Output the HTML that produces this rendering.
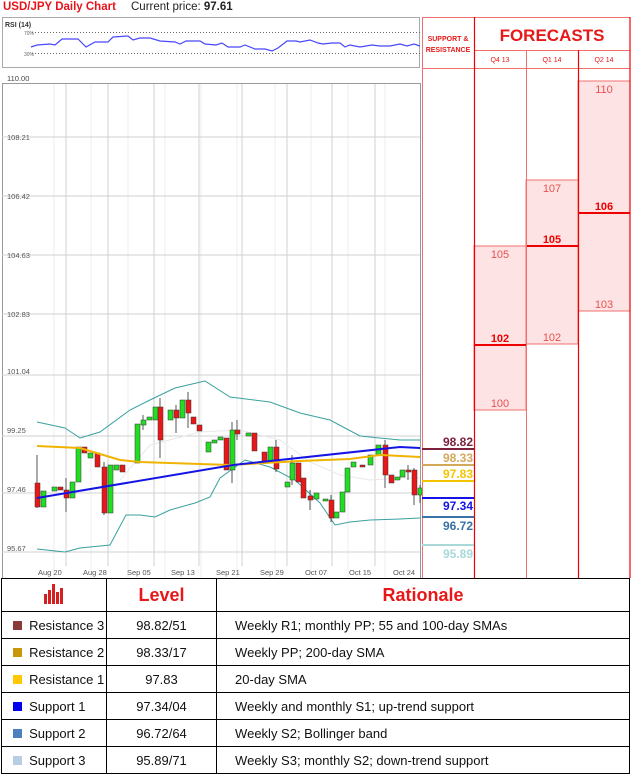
<!DOCTYPE html>
<html><head><meta charset="utf-8"><style>
body{margin:0;width:631px;height:778px;background:#fff;font-family:"Liberation Sans",sans-serif;position:relative;overflow:hidden}
.a{position:absolute}
table{border-collapse:collapse;position:absolute;left:1px;top:578px;width:629px;table-layout:fixed}
td{border:1px solid #000;font-size:13px;color:#111;height:26px;padding:0;white-space:nowrap;overflow:hidden}
</style></head><body>
<div class="a" style="left:3px;top:1px;font-size:11.5px;font-weight:bold;color:#e8141c">USD/JPY Daily Chart</div>
<div class="a" style="left:131px;top:1px;font-size:11.5px;color:#222">Current price: <b>97.61</b></div>
<svg class="a" style="left:0;top:0" width="631" height="578">
<rect x="2.5" y="17.5" width="417" height="50" fill="#fff" stroke="#aaa"/>
<text x="5" y="27" font-size="7" font-weight="bold" fill="#333">RSI (14)</text>
<text x="24" y="35" font-size="5" fill="#666">70%</text><text x="24" y="56" font-size="5" fill="#666">30%</text>
<line x1="32" y1="32.5" x2="420" y2="32.5" stroke="#666" stroke-dasharray="1,2"/>
<line x1="32" y1="53.5" x2="420" y2="53.5" stroke="#666" stroke-dasharray="1,2"/>
<polyline fill="none" stroke="#4848ff" stroke-width="1.2" points="31,47 37,45 50,44 55,45 62,39 78,39 86,47 95,42 108,42 113,37 128,36 133,40 140,38 150,38 160,41 175,42 180,44 186,41 200,41 205,44 216,45 222,43 228,47 240,47 245,45 255,49 265,49 272,51 278,48 287,41 296,41 300,42 310,40 318,43 323,44 332,43 340,43 345,47 350,45 360,47 372,45 380,46 390,46 400,44 407,46 414,44 420,46"/>
<text x="7" y="81" font-size="7.5" fill="#444">110.00</text>
<rect x="2.5" y="83.5" width="418" height="495" fill="#fff" stroke="#999"/>
<g stroke="#ececec" stroke-width="1">
<line x1="54" y1="84" x2="54" y2="578"/><line x1="91" y1="84" x2="91" y2="578"/><line x1="128" y1="84" x2="128" y2="578"/><line x1="165" y1="84" x2="165" y2="578"/><line x1="201" y1="84" x2="201" y2="578"/><line x1="237" y1="84" x2="237" y2="578"/><line x1="275" y1="84" x2="275" y2="578"/><line x1="311" y1="84" x2="311" y2="578"/><line x1="348" y1="84" x2="348" y2="578"/><line x1="385" y1="84" x2="385" y2="578"/>
</g>
<g stroke="#d0d0d0" stroke-width="1">
<line x1="66" y1="84" x2="66" y2="566"/><line x1="108" y1="84" x2="108" y2="566"/><line x1="154" y1="84" x2="154" y2="566"/><line x1="199" y1="84" x2="199" y2="566"/><line x1="242" y1="84" x2="242" y2="566"/><line x1="287" y1="84" x2="287" y2="566"/><line x1="332" y1="84" x2="332" y2="566"/><line x1="375" y1="84" x2="375" y2="566"/>
<line x1="2" y1="137" x2="420" y2="137"/><line x1="2" y1="196" x2="420" y2="196"/><line x1="2" y1="255" x2="420" y2="255"/><line x1="2" y1="314" x2="420" y2="314"/><line x1="2" y1="375" x2="420" y2="375"/><line x1="2" y1="436" x2="420" y2="436"/><line x1="2" y1="493" x2="420" y2="493"/><line x1="2" y1="552" x2="420" y2="552"/>
</g>
<g font-size="7.5" fill="#555">
<text x="7" y="140">108.21</text><text x="7" y="199">106.42</text><text x="7" y="258">104.63</text><text x="7" y="317">102.83</text><text x="7" y="374">101.04</text><text x="7" y="433">99.25</text><text x="7" y="492">97.46</text><text x="7" y="551">95.67</text>
<text x="38" y="575">Aug 20</text><text x="83" y="575">Aug 28</text><text x="127" y="575">Sep 05</text><text x="171" y="575">Sep 13</text><text x="216" y="575">Sep 21</text><text x="260" y="575">Sep 29</text><text x="305" y="575">Oct 07</text><text x="349" y="575">Oct 15</text><text x="393" y="575">Oct 24</text>
</g>
<polyline fill="none" stroke="#e8e8e8" stroke-width="1" points="120,480 150,445 200,432 240,430 280,440 310,462 340,475 370,480 400,478 420,478"/>
<polyline fill="none" stroke="#3aa0a0" stroke-width="1" points="37,422 65,428 80,438 100,432 130,410 150,400 175,388 205,381 230,397 270,402 300,413 330,420 360,436 400,440 420,440"/>
<polyline fill="none" stroke="#3aa0a0" stroke-width="1" points="37,549 65,552 80,548 110,545 126,515 140,515 155,517 170,510 195,503 210,497 220,478 245,460 270,467 295,480 320,503 335,525 350,522 370,520 400,519 420,518"/>
<g stroke="#555" stroke-width="1">
<line x1="37" y1="455" x2="37" y2="508"/><line x1="66" y1="478" x2="66" y2="512"/><line x1="104" y1="462" x2="104" y2="515"/><line x1="160" y1="398" x2="160" y2="458"/><line x1="188" y1="392" x2="188" y2="428"/><line x1="232" y1="422" x2="232" y2="483"/><line x1="237" y1="420" x2="237" y2="440"/><line x1="276" y1="440" x2="276" y2="472"/><line x1="292" y1="455" x2="292" y2="485"/><line x1="310" y1="490" x2="310" y2="510"/><line x1="331" y1="495" x2="331" y2="522"/><line x1="385" y1="440" x2="385" y2="488"/><line x1="408" y1="465" x2="408" y2="480"/><line x1="414" y1="468" x2="414" y2="505"/><line x1="420" y1="485" x2="420" y2="503"/><line x1="143" y1="415" x2="143" y2="430"/><line x1="176" y1="405" x2="176" y2="433"/>
</g>
<g stroke="#333" stroke-width="0.5">
<rect x="35" y="483" width="5" height="24" fill="#e81818"/><rect x="41" y="491" width="5" height="16" fill="#22dd22"/><rect x="52" y="487" width="5" height="4" fill="#22dd22"/><rect x="58" y="487" width="5" height="3" fill="#e81818"/><rect x="64" y="490" width="5" height="8" fill="#e81818"/><rect x="70" y="482" width="5" height="16" fill="#22dd22"/><rect x="76" y="447" width="5" height="35" fill="#22dd22"/><rect x="82" y="447" width="5" height="6" fill="#e81818"/><rect x="88" y="453" width="5" height="5" fill="#22dd22"/><rect x="95" y="453" width="5" height="14" fill="#e81818"/><rect x="102" y="467" width="5" height="46" fill="#e81818"/><rect x="108" y="465" width="5" height="48" fill="#22dd22"/><rect x="114" y="465" width="5" height="5" fill="#22dd22"/><rect x="120" y="465" width="5" height="7" fill="#e81818"/>
<rect x="135" y="424" width="5" height="39" fill="#22dd22"/><rect x="141" y="420" width="5" height="5" fill="#22dd22"/><rect x="147" y="417" width="5" height="3" fill="#22dd22"/><rect x="153" y="407" width="5" height="13" fill="#22dd22"/><rect x="158" y="407" width="5" height="33" fill="#e81818"/><rect x="168" y="410" width="5" height="10" fill="#22dd22"/><rect x="174" y="410" width="5" height="8" fill="#e81818"/><rect x="180" y="400" width="5" height="18" fill="#22dd22"/><rect x="186" y="400" width="5" height="13" fill="#e81818"/><rect x="191" y="417" width="5" height="7" fill="#e81818"/><rect x="197" y="425" width="5" height="6" fill="#e81818"/>
<rect x="206" y="442" width="5" height="10" fill="#22dd22"/><rect x="212" y="440" width="5" height="3" fill="#22dd22"/><rect x="218" y="437" width="5" height="3" fill="#22dd22"/><rect x="224" y="438" width="5" height="32" fill="#e81818"/><rect x="230" y="430" width="5" height="40" fill="#22dd22"/><rect x="235" y="430" width="5" height="4" fill="#e81818"/><rect x="246" y="433" width="5" height="3" fill="#22dd22"/><rect x="252" y="433" width="5" height="18" fill="#e81818"/><rect x="262" y="452" width="5" height="10" fill="#e81818"/><rect x="268" y="447" width="5" height="15" fill="#22dd22"/><rect x="274" y="447" width="5" height="22" fill="#e81818"/>
<rect x="285" y="482" width="5" height="5" fill="#22dd22"/><rect x="290" y="463" width="5" height="17" fill="#22dd22"/><rect x="296" y="463" width="5" height="19" fill="#e81818"/><rect x="301" y="478" width="5" height="20" fill="#e81818"/><rect x="308" y="496" width="5" height="4" fill="#e81818"/><rect x="314" y="493" width="5" height="6" fill="#22dd22"/><rect x="323" y="499" width="5" height="2" fill="#22dd22"/><rect x="329" y="500" width="5" height="18" fill="#e81818"/><rect x="334" y="512" width="5" height="6" fill="#22dd22"/><rect x="340" y="492" width="5" height="20" fill="#22dd22"/><rect x="345" y="468" width="5" height="24" fill="#22dd22"/><rect x="351" y="462" width="5" height="5" fill="#22dd22"/><rect x="360" y="465" width="5" height="2" fill="#e81818"/><rect x="368" y="455" width="5" height="10" fill="#22dd22"/><rect x="376" y="445" width="5" height="10" fill="#22dd22"/><rect x="383" y="445" width="5" height="30" fill="#e81818"/><rect x="389" y="475" width="5" height="8" fill="#e81818"/><rect x="395" y="477" width="5" height="3" fill="#22dd22"/><rect x="400" y="470" width="5" height="7" fill="#22dd22"/><rect x="406" y="470" width="5" height="2" fill="#e81818"/><rect x="412" y="470" width="5" height="25" fill="#e81818"/><rect x="418" y="488" width="4" height="7" fill="#22dd22"/>
</g>
<polyline fill="none" stroke="#f0b400" stroke-width="2" points="37,446 80,448 120,460 140,462 200,464 230,465 300,461 350,459 380,455 420,457"/>
<polyline fill="none" stroke="#1414e6" stroke-width="2" points="37,498 233,465 400,447 420,448"/>
<rect x="422" y="84" width="52" height="494" fill="#fff"/>
<rect x="474" y="246" width="52" height="164" fill="#fde3e3" stroke="#f07070" stroke-width="1"/>
<rect x="526" y="180" width="52" height="164" fill="#fde3e3" stroke="#f07070" stroke-width="1"/>
<rect x="578" y="81" width="52" height="230" fill="#fde3e3" stroke="#f07070" stroke-width="1"/>
<line x1="474" y1="345" x2="526" y2="345" stroke="#e00" stroke-width="2"/>
<line x1="526" y1="246" x2="578" y2="246" stroke="#e00" stroke-width="2"/>
<line x1="578" y1="213" x2="630" y2="213" stroke="#e00" stroke-width="2"/>
<g font-size="11" fill="#e85050" text-anchor="middle">
<text x="500" y="258">105</text><text x="500" y="407">100</text><text x="552" y="192">107</text><text x="552" y="341">102</text><text x="604" y="93">110</text><text x="604" y="308">103</text>
</g>
<g font-size="11" font-weight="bold" fill="#e00" text-anchor="middle">
<text x="500" y="342">102</text><text x="552" y="243">105</text><text x="604" y="210">106</text>
</g>
<g stroke="#f07070" stroke-width="1" fill="none">
<line x1="422.5" y1="17" x2="422.5" y2="578"/><line x1="526.5" y1="50" x2="526.5" y2="578"/>
<line x1="422" y1="17.5" x2="630" y2="17.5"/><line x1="474" y1="50.5" x2="630" y2="50.5"/><line x1="422" y1="68.5" x2="630" y2="68.5"/>
</g>
<g stroke="#e00" stroke-width="1.2">
<line x1="474.5" y1="17" x2="474.5" y2="578"/><line x1="578.5" y1="50" x2="578.5" y2="578"/><line x1="630" y1="17" x2="630" y2="578"/>
</g>
<text x="448" y="41" font-size="7" font-weight="bold" fill="#e81818" text-anchor="middle">SUPPORT &amp;</text>
<text x="448" y="52" font-size="7" font-weight="bold" fill="#e81818" text-anchor="middle">RESISTANCE</text>
<text x="552" y="41" font-size="17" font-weight="bold" fill="#e81818" text-anchor="middle">FORECASTS</text>
<g font-size="7" fill="#e81818" text-anchor="middle"><text x="500" y="62">Q4 13</text><text x="552" y="62">Q1 14</text><text x="604" y="62">Q2 14</text></g>
<line x1="422" y1="449" x2="474" y2="449" stroke="#7b1f3a" stroke-width="2"/>
<line x1="422" y1="465" x2="474" y2="465" stroke="#d4a85a" stroke-width="2"/>
<line x1="422" y1="481" x2="474" y2="481" stroke="#f5c400" stroke-width="2"/>
<line x1="422" y1="498" x2="474" y2="498" stroke="#1414e6" stroke-width="2"/>
<line x1="422" y1="517" x2="474" y2="517" stroke="#3a72a8" stroke-width="2"/>
<line x1="422" y1="545" x2="474" y2="545" stroke="#a8d8d8" stroke-width="2"/>
<g font-size="12" font-weight="bold" text-anchor="end">
<text x="473" y="446" fill="#7b1f3a">98.82</text><text x="473" y="462" fill="#d4a85a">98.33</text><text x="473" y="478" fill="#f5c400">97.83</text><text x="473" y="510" fill="#1414e6">97.34</text><text x="473" y="530" fill="#3a72a8">96.72</text><text x="473" y="558" fill="#a8d8d8">95.89</text>
</g>
</svg>
<table>
<colgroup><col style="width:105px"><col style="width:110px"><col></colgroup>
<tr><td style="height:32px;text-align:center"><svg width="22" height="20" viewBox="0 0 22 20"><g fill="#d42020"><rect x="1" y="10" width="3" height="10"/><rect x="5" y="6" width="3" height="14"/><rect x="9" y="0" width="3" height="20"/><rect x="13" y="8" width="3" height="12"/><rect x="17" y="4" width="3" height="16"/></g></svg></td><td style="text-align:center;color:#e81818;font-weight:bold;font-size:18px">Level</td><td style="text-align:center;color:#e81818;font-weight:bold;font-size:18px">Rationale</td></tr>
<tr><td>&nbsp;&nbsp;&nbsp;<span style="display:inline-block;width:9px;height:9px;background:#8b3a3a"></span>&nbsp; Resistance 3</td><td style="text-align:center">98.82/51</td><td>&nbsp;&nbsp;&nbsp;&nbsp;&nbsp;Weekly R1; monthly PP; 55 and 100-day SMAs</td></tr>
<tr><td>&nbsp;&nbsp;&nbsp;<span style="display:inline-block;width:9px;height:9px;background:#c8960a"></span>&nbsp; Resistance 2</td><td style="text-align:center">98.33/17</td><td>&nbsp;&nbsp;&nbsp;&nbsp;&nbsp;Weekly PP; 200-day SMA</td></tr>
<tr><td>&nbsp;&nbsp;&nbsp;<span style="display:inline-block;width:9px;height:9px;background:#ffc800"></span>&nbsp; Resistance 1</td><td style="text-align:center">97.83</td><td>&nbsp;&nbsp;&nbsp;&nbsp;&nbsp;20-day SMA</td></tr>
<tr><td>&nbsp;&nbsp;&nbsp;<span style="display:inline-block;width:9px;height:9px;background:#0000ee"></span>&nbsp; Support 1</td><td style="text-align:center">97.34/04</td><td>&nbsp;&nbsp;&nbsp;&nbsp;&nbsp;Weekly and monthly S1; up-trend support</td></tr>
<tr><td>&nbsp;&nbsp;&nbsp;<span style="display:inline-block;width:9px;height:9px;background:#4a7fc0"></span>&nbsp; Support 2</td><td style="text-align:center">96.72/64</td><td>&nbsp;&nbsp;&nbsp;&nbsp;&nbsp;Weekly S2; Bollinger band</td></tr>
<tr><td>&nbsp;&nbsp;&nbsp;<span style="display:inline-block;width:9px;height:9px;background:#b8cce4"></span>&nbsp; Support 3</td><td style="text-align:center">95.89/71</td><td>&nbsp;&nbsp;&nbsp;&nbsp;&nbsp;Weekly S3; monthly S2; down-trend support</td></tr>
</table>
</body></html>
